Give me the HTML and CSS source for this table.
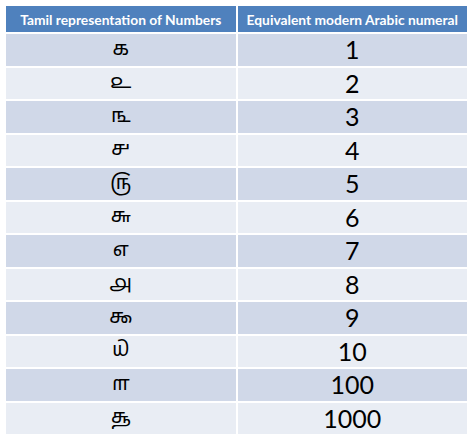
FILE: index.html
```html
<!DOCTYPE html>
<html>
<head>
<meta charset="utf-8">
<link rel="stylesheet" href="styles.css">
</head>
<body>
<table class="nums">
  <thead>
    <tr><th>Tamil representation of Numbers</th><th>Equivalent modern Arabic numeral</th></tr>
  </thead>
  <tbody>
    <tr><td class="ta">௧</td><td class="ar">1</td></tr>
    <tr><td class="ta">௨</td><td class="ar">2</td></tr>
    <tr><td class="ta">௩</td><td class="ar">3</td></tr>
    <tr><td class="ta">௪</td><td class="ar">4</td></tr>
    <tr><td class="ta">௫</td><td class="ar">5</td></tr>
    <tr><td class="ta">௬</td><td class="ar">6</td></tr>
    <tr><td class="ta">௭</td><td class="ar">7</td></tr>
    <tr><td class="ta">௮</td><td class="ar">8</td></tr>
    <tr><td class="ta">௯</td><td class="ar">9</td></tr>
    <tr><td class="ta">௰</td><td class="ar">10</td></tr>
    <tr><td class="ta">௱</td><td class="ar">100</td></tr>
    <tr><td class="ta">௲</td><td class="ar">1000</td></tr>
  </tbody>
</table>
</body>
</html>
```

FILE: styles.css
```css
html, body {
  margin: 0;
  padding: 0;
  background: #ffffff;
}
body {
  padding: 4px 0 0 4px;
  font-family: "Lato", "Open Sans", sans-serif;
}
.nums {
  border-collapse: separate;
  border-spacing: 2px;
  width: 465px;
  table-layout: fixed;
}
.nums th, .nums td {
  border: 0;
  padding: 0;
  text-align: center;
  width: 50%;
}
.nums th {
  background: #4f81bd;
  color: #ffffff;
  font-weight: bold;
  font-size: 13.8px;
  height: 26px;
}
.nums td {
  height: 31.5px;
  color: #000000;
}
.nums tbody tr:nth-child(odd) td { background: #d0d8e8; }
.nums tbody tr:nth-child(even) td { background: #e9edf4; }
.ta {
  font-family: "Noto Sans Tamil", "Lohit Tamil", "Noto Sans", sans-serif;
  font-size: 20px;
  line-height: 1;
  padding-top: 4px;
}
.ar {
  font-size: 25px;
  line-height: 1;
  padding-top: 5px;
}
```
